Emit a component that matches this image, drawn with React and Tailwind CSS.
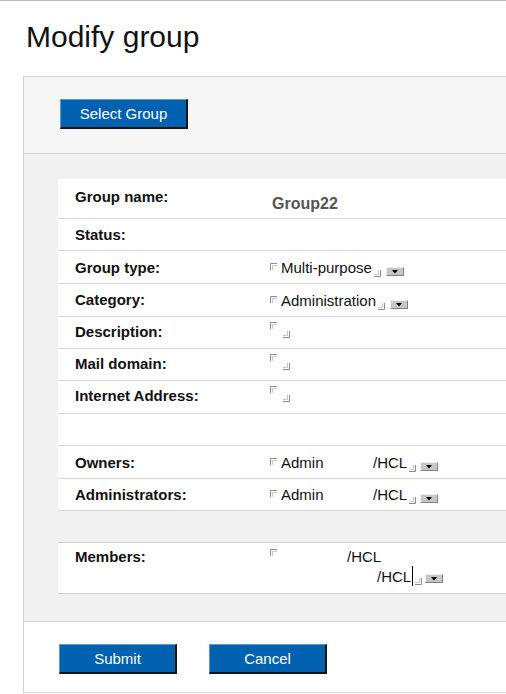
import React from "react";

function MarkTL({ className = "" }) {
  return (
    <svg width="7" height="7" viewBox="0 0 7 7" className={"block shrink-0 " + className}>
      <path d="M0.5 7 V0.5 H7" fill="none" stroke="#8a8a8a" strokeWidth="1" />
      <path d="M2.5 7 V2.5 H7" fill="none" stroke="#c8c8c8" strokeWidth="1" />
    </svg>
  );
}

function MarkBR({ className = "" }) {
  return (
    <svg width="7" height="7" viewBox="0 0 7 7" className={"block shrink-0 " + className}>
      <path d="M0 6.5 H6.5 V0" fill="none" stroke="#8a8a8a" strokeWidth="1" />
      <path d="M0 4.5 H4.5 V0" fill="none" stroke="#c8c8c8" strokeWidth="1" />
    </svg>
  );
}

function DropBox({ className = "" }) {
  return (
    <span
      className={
        "flex shrink-0 items-center justify-center w-[18px] h-[9px] bg-[#c6c6c6] border-t border-l border-t-[#f0f0f0] border-l-[#f0f0f0] border-b border-r border-b-[#808080] border-r-[#808080] " +
        className
      }
    >
      <svg width="6" height="4" viewBox="0 0 6 4" className="block">
        <path d="M0 0 H6 L3 3.5 Z" fill="#000" />
      </svg>
    </span>
  );
}

function FieldValue({ text }) {
  return (
    <div className="flex items-start">
      <MarkTL className="mt-[3px]" />
      <span className="block ml-[4px] leading-[16px] text-[15px] text-[#111]">{text}</span>
      <MarkBR className="mt-[10px] ml-[2px]" />
      <DropBox className="mt-[7px] ml-[5px]" />
    </div>
  );
}

function NameValue() {
  return (
    <div className="flex items-start">
      <MarkTL className="mt-[3px]" />
      <span className="block ml-[4px] leading-[16px] text-[15px] text-[#111] w-[92px]">Admin</span>
      <span className="block leading-[16px] text-[15px] text-[#111]">/HCL</span>
      <MarkBR className="mt-[10px] ml-[2px]" />
      <DropBox className="mt-[7px] ml-[4px]" />
    </div>
  );
}

function EmptyValue() {
  return (
    <div className="flex items-start">
      <MarkTL />
      <MarkBR className="mt-[9px] ml-[6px]" />
    </div>
  );
}

function MembersValue() {
  return (
    <div className="flex flex-col">
      <div className="flex items-start">
        <MarkTL />
        <span className="block ml-[70px] leading-[16px] text-[15px] text-[#111]">/HCL</span>
      </div>
      <div className="flex items-start mt-[4px] pl-[107px]">
        <span className="block leading-[16px] text-[15px] text-[#111]">/HCL</span>
        <span className="block w-px h-[20px] bg-black -mt-[3px] ml-[1px]" />
        <MarkBR className="mt-[9px] ml-[2px]" />
        <DropBox className="mt-[5px] ml-[3px]" />
      </div>
    </div>
  );
}

const rows = [
  { h: "h-[40px]", label: "Group name:", lpt: "pt-[10px]", vpt: "pt-[17px]", v: "group" },
  { h: "h-[32px]", label: "Status:", lpt: "pt-[8px]", vpt: "pt-[8px]", v: null },
  { h: "h-[33px]", label: "Group type:", lpt: "pt-[9px]", vpt: "pt-[9px]", v: "field", text: "Multi-purpose" },
  { h: "h-[33px]", label: "Category:", lpt: "pt-[8px]", vpt: "pt-[9px]", v: "field", text: "Administration" },
  { h: "h-[32px]", label: "Description:", lpt: "pt-[7px]", vpt: "pt-[5px]", v: "empty" },
  { h: "h-[32px]", label: "Mail domain:", lpt: "pt-[7px]", vpt: "pt-[5px]", v: "empty" },
  { h: "h-[33px]", label: "Internet Address:", lpt: "pt-[7px]", vpt: "pt-[5px]", v: "empty" },
  { h: "h-[32px]", label: "", lpt: "pt-[7px]", vpt: "pt-[7px]", v: null },
  { h: "h-[33px]", label: "Owners:", lpt: "pt-[9px]", vpt: "pt-[9px]", v: "name" },
  { h: "h-[32px]", label: "Administrators:", lpt: "pt-[8px]", vpt: "pt-[8px]", v: "name" },
  { h: "h-[32px]", label: "", lpt: "", vpt: "", v: null, gray: true },
  { h: "h-[51px]", label: "Members:", lpt: "pt-[6px]", vpt: "pt-[6px]", v: "members" },
];

function Value({ row }) {
  if (row.v === "group")
    return <span className="block ml-[2px] text-[16px] leading-[16px] font-bold text-[#555]">Group22</span>;
  if (row.v === "field") return <FieldValue text={row.text} />;
  if (row.v === "empty") return <EmptyValue />;
  if (row.v === "name") return <NameValue />;
  if (row.v === "members") return <MembersValue />;
  return null;
}

function BlueButton({ w, children }) {
  return (
    <button
      type="button"
      className={
        "h-[30px] bg-[#0061b0] text-white text-[15px] leading-[16px] border-t border-l border-t-[#5d9ad3] border-l-[#5d9ad3] border-b-2 border-r-2 border-b-[#151515] border-r-[#151515] flex items-center justify-center " +
        w
      }
    >
      {children}
    </button>
  );
}

export default function App() {
  return (
    <div
      className="w-[506px] h-[694px] overflow-hidden bg-white border-t border-[#bdbdbd]"
      style={{ fontFamily: '"Liberation Sans", Arial, sans-serif' }}
    >
      <h1 className="ml-[26px] mt-[21px] mb-[25px] text-[30px] leading-[29px] font-normal text-[#111]">
        Modify group
      </h1>
      <div className="ml-[23px] w-[620px] border border-[#d2d2d2]">
        <div className="h-[77px] bg-[#f6f6f6] pt-[22px] pl-[36px] border-b border-[#d0d0d0]">
          <BlueButton w="w-[128px]">Select Group</BlueButton>
        </div>
        <div className="bg-[#f1f1f1] pt-[25px] pb-[27px] pl-[34px] border-b border-[#d0d0d0]">
          <div className="bg-white">
            {rows.map((row, i) => (
              <div
                key={i}
                className={
                  "flex items-start border-b border-[#d4d4d4] " +
                  row.h +
                  (row.gray ? " bg-[#f1f1f1]" : "")
                }
              >
                <div className={"w-[212px] pl-[17px] text-[15px] leading-[16px] font-bold text-[#111] " + row.lpt}>
                  {row.label}
                </div>
                <div className={row.vpt}>
                  <Value row={row} />
                </div>
              </div>
            ))}
          </div>
        </div>
        <div className="h-[70px] bg-white pt-[22px] pl-[35px] flex items-start gap-[32px]">
          <BlueButton w="w-[118px]">Submit</BlueButton>
          <BlueButton w="w-[118px]">Cancel</BlueButton>
        </div>
      </div>
    </div>
  );
}
